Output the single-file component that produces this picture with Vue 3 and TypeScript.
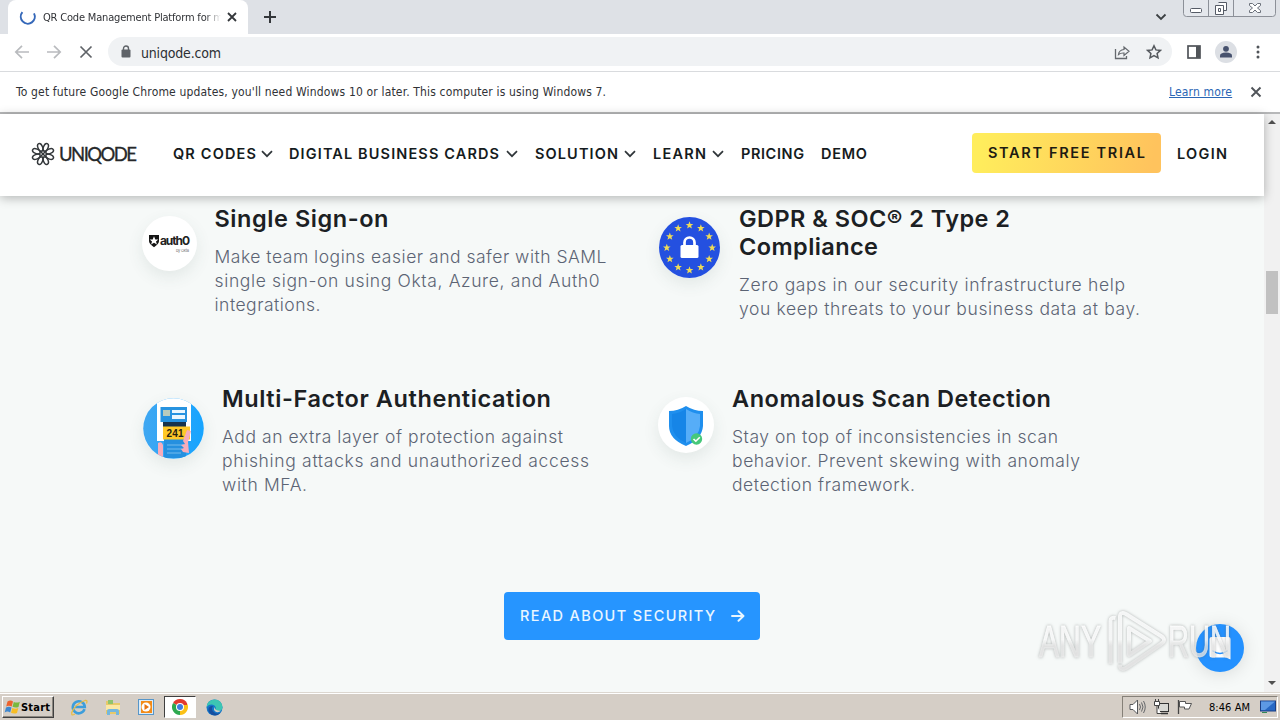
<script setup lang="ts">
import type { Directive } from 'vue'

interface Line { text: string; width: number }
interface Feature { id: string; title: Line[]; body: Line[] }
interface NavItem { text: string; width: number; menu: boolean }

// Tracks a single line of text so that it spans exactly the given width.
const vFit: Directive<HTMLElement, number> = {
  mounted(el, { value }) {
    const count = (el.textContent ?? '').trim().length
    const natural = el.getBoundingClientRect().width
    if (count > 1) el.style.letterSpacing = `${(value - natural) / (count - 1)}px`
    el.style.width = `${value}px`
  },
}

const nav: NavItem[] = [
  { text: 'QR CODES', width: 83, menu: true },
  { text: 'DIGITAL BUSINESS CARDS', width: 210, menu: true },
  { text: 'SOLUTION', width: 83, menu: true },
  { text: 'LEARN', width: 53, menu: true },
  { text: 'PRICING', width: 63, menu: false },
  { text: 'DEMO', width: 46, menu: false },
]

const features: Feature[] = [
  {
    id: 'sso',
    title: [{ text: 'Single Sign-on', width: 174 }],
    body: [
      { text: 'Make team logins easier and safer with SAML', width: 392 },
      { text: 'single sign-on using Okta, Azure, and Auth0', width: 385 },
      { text: 'integrations.', width: 106 },
    ],
  },
  {
    id: 'gdpr',
    title: [{ text: 'GDPR & SOC® 2 Type 2', width: 271 }, { text: 'Compliance', width: 139 }],
    body: [
      { text: 'Zero gaps in our security infrastructure help', width: 386 },
      { text: 'you keep threats to your business data at bay.', width: 401 },
    ],
  },
  {
    id: 'mfa',
    title: [{ text: 'Multi-Factor Authentication', width: 329 }],
    body: [
      { text: 'Add an extra layer of protection against', width: 341 },
      { text: 'phishing attacks and unauthorized access', width: 367 },
      { text: 'with MFA.', width: 85 },
    ],
  },
  {
    id: 'scan',
    title: [{ text: 'Anomalous Scan Detection', width: 319 }],
    body: [
      { text: 'Stay on top of inconsistencies in scan', width: 326 },
      { text: 'behavior. Prevent skewing with anomaly', width: 348 },
      { text: 'detection framework.', width: 183 },
    ],
  },
]

const star = '0,-4 1,-1.3 3.8,-1.2 1.6,.5 2.4,3.2 0,1.6 -2.4,3.2 -1.6,.5 -3.8,-1.2 -1,-1.3'
const stars = Array.from({ length: 12 }, (_, i) => {
  const a = (i * Math.PI) / 6
  return `translate(${(30.5 + 22.7 * Math.sin(a)).toFixed(2)} ${(30.8 - 22.5 * Math.cos(a)).toFixed(2)})`
})
const petals = [22.5, 67.5, 112.5, 157.5, 202.5, 247.5, 292.5, 337.5]
</script>

<template>
  <div class="screen">
    <div class="tabstrip">
      <div class="tab">
        <svg class="spinner" width="18" height="18" viewBox="0 0 18 18"><path d="M3.4 4.2A7 7 0 1 0 15 5.4" fill="none" stroke="#3568b9" stroke-width="2" /></svg>
        <div class="tab-title"><span v-fit="180" class="fit">QR Code Management Platform for m</span></div>
        <svg width="10" height="10" viewBox="0 0 10 10"><path d="M1 1l8 8M9 1l-8 8" stroke="#34373b" stroke-width="1.8" /></svg>
      </div>
      <svg class="plus" width="14" height="14" viewBox="0 0 14 14"><path d="M7 1v12M1 7h12" stroke="#34373b" stroke-width="2" /></svg>
      <svg class="tab-search" width="12" height="8" viewBox="0 0 12 8"><path d="M1.5 1.5L6 6l4.5-4.5" fill="none" stroke="#3c4043" stroke-width="1.8" /></svg>
      <div class="winctl">
        <svg width="94" height="17" viewBox="0 0 94 17">
          <path d="M.5 0v13.5q0 3 3 3h86q3 0 3-3V0M25.5 0v16M50.5 0v16" fill="#e4e7ec" stroke="#8c9098" />
          <rect x="7.5" y="8.5" width="11" height="4" rx="1" fill="#fff" stroke="#555b66" />
          <path d="M35.500 2.500h8v8h-3M32.500 5.500h8v9h-8zM35.500 8.500h2v3h-2z" fill="#fff" stroke="#555b66" />
          <path d="M66.500 3.500h3l2.500 2.500 2.500-2.500h3v2l-3 2.500 3 2.500v2h-3l-2.500-2.500-2.500 2.500h-3v-2l3-2.500-3-2.500z" fill="#fff" stroke="#6a707a" />
        </svg>
      </div>
    </div>

    <div class="toolbar">
      <svg class="nav-ico" width="16" height="16" viewBox="0 0 16 16"><path d="M15 8H2M8 1.800L1.800 8 8 14.200" fill="none" stroke="#b9bbbe" stroke-width="1.700" /></svg>
      <svg class="nav-ico" width="16" height="16" viewBox="0 0 16 16"><path d="M1 8h13M8 1.800L14.200 8 8 14.200" fill="none" stroke="#b9bbbe" stroke-width="1.700" /></svg>
      <svg class="nav-ico" width="16" height="16" viewBox="0 0 16 16"><path d="M2.500 2.500l11 11M13.500 2.500l-11 11" stroke="#5f6368" stroke-width="1.700" /></svg>
      <div class="omnibox">
        <svg width="10" height="13" viewBox="0 0 10 13"><rect x=".5" y="4.500" width="9" height="8" rx="1" fill="#5f6368" /><path d="M2.500 5V3.500a2.500 2.500 0 0 1 5 0V5" fill="none" stroke="#5f6368" stroke-width="1.400" /></svg>
        <span v-fit="80" class="fit url">uniqode.com</span>
        <svg class="share" width="16" height="16" viewBox="0 0 16 16"><path d="M1.500 5v9.500h11V12" fill="none" stroke="#65696e" stroke-width="1.300" /><path d="M4.500 10.500Q5 6 10 5.500V3l5 4.300-5 4.200V9Q6.500 8.800 4.500 10.500z" fill="none" stroke="#65696e" stroke-width="1.200" /></svg>
        <svg class="fav" width="16" height="16" viewBox="0 0 16 16"><path d="M8 1.800l1.900 4.100 4.500.5-3.300 3 .9 4.500L8 11.700l-4 2.200.9-4.500-3.300-3 4.500-.5z" fill="none" stroke="#55595e" stroke-width="1.500" /></svg>
      </div>
      <svg class="side" width="14" height="14" viewBox="0 0 14 14"><rect x="1" y="1" width="12" height="12" fill="none" stroke="#505459" stroke-width="1.700" /><path d="M9 1h4v12H9z" fill="#505459" /></svg>
      <svg class="avatar" width="22" height="22" viewBox="0 0 22 22"><circle cx="11" cy="11" r="11" fill="#dcdfe4" /><circle cx="11" cy="7.800" r="2.900" fill="#46516d" /><path d="M5 16.500v-1.700q0-3 6-3.200 6 .2 6 3.200v1.700z" fill="#46516d" /></svg>
      <svg class="dots" width="4" height="14" viewBox="0 0 4 14"><circle cx="2" cy="2" r="1.500" /><circle cx="2" cy="7" r="1.500" /><circle cx="2" cy="12" r="1.500" /></svg>
    </div>

    <div class="infobar">
      <span v-fit="590" class="fit">To get future Google Chrome updates, you'll need Windows 10 or later. This computer is using Windows 7.</span>
      <a class="learn"><span v-fit="63" class="fit">Learn more</span></a>
      <svg width="12" height="12" viewBox="0 0 12 12"><path d="M1.500 1.500l9 9M10.500 1.500l-9 9" stroke="#505459" stroke-width="1.900" /></svg>
    </div>

    <div class="viewport">
      <div class="page">
        <header class="site-header">
          <svg class="mark" width="24" height="24" viewBox="-12 -12 24 24">
            <g fill="none" stroke="#34383b" stroke-width="1.500">
              <ellipse v-for="a in petals" :key="a" cx="0" cy="-7.200" rx="2.300" ry="4" :transform="`rotate(${a})`" />
              <path d="M-4.500-4.500L4.500 4.500M4.500-4.500L-4.500 4.500M0-4v8M-4 0h8" stroke-width="1" />
            </g>
          </svg>
          <span v-fit="78" class="fit wordmark">UNIQODE</span>
          <nav class="nav">
            <span v-for="item in nav" :key="item.text" class="nav-item">
              <span v-fit="item.width" class="fit">{{ item.text }}</span>
              <svg v-if="item.menu" width="12" height="8" viewBox="0 0 12 8"><path d="M1 1.200L6 6.200l5-5" fill="none" stroke="#30363a" stroke-width="1.700" /></svg>
            </span>
          </nav>
          <a class="trial"><span v-fit="157" class="fit">START FREE TRIAL</span></a>
          <span v-fit="50" class="fit login">LOGIN</span>
        </header>

        <main class="features">
          <article v-for="f in features" :key="f.id" class="feature" :class="`feature-${f.id}`">
            <div class="badge">
              <svg v-if="f.id === 'sso'" width="55" height="55" viewBox="0 0 55 55">
                <path d="M7 19h10v6q0 3-5 6.200-5-3.200-5-6.200z" fill="#151515" />
                <path d="M12 20.300l1.300 3.100 3 .1-2.300 2 .9 3.100-2.900-1.900-2.900 1.900.9-3.100-2.300-2 3-.1z" fill="#fff" />
                <text x="18" y="29" class="auth" textLength="30">auth0</text>
                <text x="34" y="35.500" class="byokta" textLength="13">by Okta</text>
              </svg>
              <svg v-else-if="f.id === 'gdpr'" width="61" height="61" viewBox="0 0 61 61">
                <circle cx="30.500" cy="30.500" r="30.500" fill="#2450e0" />
                <polygon v-for="s in stars" :key="s" :points="star" :transform="s" fill="#eedb58" />
                <rect x="21.500" y="28" width="18" height="13" rx="1.500" fill="#fff" />
                <path d="M25.500 29v-3.500a5 5 0 0 1 10 0V29" fill="none" stroke="#fff" stroke-width="2.700" />
              </svg>
              <svg v-else-if="f.id === 'mfa'" width="61" height="61" viewBox="0 0 61 61">
                <defs>
                  <clipPath id="mfaClip"><circle cx="30.500" cy="30.500" r="30.300" /></clipPath>
                  <linearGradient id="mfaSky" x1="0" x2="1"><stop stop-color="#40a7f1" /><stop offset="1" stop-color="#16a4ff" /></linearGradient>
                </defs>
                <g clip-path="url(#mfaClip)">
                  <rect width="61" height="61" fill="url(#mfaSky)" />
                  <path d="M14 0h34v43H14z" fill="#fff" />
                  <rect x="17.500" y="9" width="26.500" height="15" fill="#2793e0" />
                  <rect x="20" y="12" width="7" height="6" fill="#b9cbbd" />
                  <path d="M29 12h13v3H29zM29 17h13v4H29z" fill="#eaf7ff" />
                  <path d="M20 24h23v6H20z" fill="#17334c" />
                  <path d="M21 40h22v20H21z" fill="#2590df" />
                  <path d="M24 47h17M24 51h15M24 55h14" stroke="#74bbec" />
                  <rect x="20" y="28.500" width="27" height="13" fill="#ffc928" />
                  <text x="23.500" y="38.500" class="code" textLength="17">241</text>
                  <path d="M15 45q4-2 5 2v14h-5zM44 32l4 1-3 11 1 11-6-1-2-3 3-1-3-3 4-1-2-3z" fill="#f8acba" />
                </g>
              </svg>
              <svg v-else width="56" height="56" viewBox="0 0 56 56">
                <path d="M28 9Q36 14 45 14V29Q44 42 28 49 11 42 11 29V14Q20 14 28 9z" fill="#1f8fee" />
                <path d="M28 12Q35 16.500 42 17v12Q41 40 28 46z" fill="#56adf8" />
                <path d="M28 12Q21 16.500 14 17v12q1 11 14 17z" fill="#1685e7" />
                <circle cx="38.500" cy="42" r="5.700" fill="#46c87a" /><path d="M35.500 42l2.300 2.200 4-4" fill="none" stroke="#fff" stroke-width="1.600" />
              </svg>
            </div>
            <div>
              <h3><span v-for="l in f.title" :key="l.text" v-fit="l.width" class="fit line">{{ l.text }}</span></h3>
              <p><span v-for="l in f.body" :key="l.text" v-fit="l.width" class="fit line">{{ l.text }}</span></p>
            </div>
          </article>
        </main>

        <a class="cta">
          <span v-fit="195" class="fit">READ ABOUT SECURITY</span>
          <svg width="14" height="12" viewBox="0 0 14 12"><path d="M1 6h11M7.500 1.200L12.500 6l-5 4.800" fill="none" stroke="#e9f6ff" stroke-width="1.900" stroke-linecap="round" stroke-linejoin="round" /></svg>
        </a>
      </div>
      <div class="scrollbar">
        <svg width="8" height="5" viewBox="0 0 8 5"><path d="M0 5l4-4 4 4z" fill="#505050" /></svg>
        <div class="thumb"></div>
        <svg class="down" width="8" height="5" viewBox="0 0 8 5"><path d="M0 0l4 4 4-4z" fill="#505050" /></svg>
      </div>
    </div>

    <footer class="taskbar">
      <div class="start">
        <svg width="17" height="16" viewBox="0 0 17 16">
          <path d="M3.500 2.500q3-2 5.500 0L7.700 7.500q-3-1.500-5.500 0z" fill="#ed622d" /><path d="M9.800 3q3 1.300 6-.3L14.500 8q-3 1.200-6-.3z" fill="#79b83d" />
          <path d="M2 8.500q3-1.500 5.500 0L6.200 13.500q-3-1.800-5.500 0z" fill="#3e87cf" /><path d="M8.300 9q3 1.400 6 .1L13 14q-3 1.200-6-.2z" fill="#f7bd25" />
        </svg>
        <span v-fit="29" class="fit">Start</span>
      </div>
      <svg class="app-ico ie" width="18" height="18" viewBox="0 0 18 18"><path d="M14.500 11.200a6 6 0 1 1 .3-2.200H5" fill="none" stroke="#3d9edb" stroke-width="2.600" /><path d="M2 14.500q-1.500 4 3 1.500M1.500 15Q5 6 15 2.500q3-.7 1.500 3" fill="none" stroke="#e8bd44" stroke-width="1.300" /></svg>
      <svg class="app-ico" width="18" height="18" viewBox="0 0 18 18"><path d="M2 3h6l1 2h7v11H2z" fill="#e7c969" /><path d="M4 2h5v4H4z" fill="#8fc46d" /><path d="M2 7h14v5H2z" fill="#fae8a5" /><path d="M3 17v-4q0-2 2-2h8q2 0 2 2v4h-3v-3H6v3z" fill="#74b7dd" /></svg>
      <svg class="app-ico" width="16" height="16" viewBox="0 0 16 16"><rect x=".5" y=".5" width="15" height="15" fill="#dcecf8" stroke="#5796c9" /><rect x="3" y="2" width="11" height="12" fill="#f38b18" /><circle cx="8" cy="8" r="4.500" fill="#fff" /><path d="M6.500 5l4.500 3-4.500 3z" fill="#e67412" /></svg>
      <div class="active-app">
        <svg width="16" height="16" viewBox="0 0 16 16"><path d="M8 8L1.070 4A8 8 0 0 1 14.930 4z" fill="#e33b2e" /><path d="M8 8l6.930-4A8 8 0 0 1 8 16z" fill="#fbc116" /><path d="M8 8v8A8 8 0 0 1 1.070 4z" fill="#2da94f" /><path d="M8 4h7v2H8z" fill="#e33b2e" /><circle cx="8" cy="8" r="4" fill="#fff" /><circle cx="8" cy="8" r="3" fill="#3f7de0" /></svg>
      </div>
      <svg class="app-ico edge" width="17" height="17" viewBox="0 0 17 17"><circle cx="8.500" cy="8.500" r="8" fill="#1476c9" /><path d="M.7 8Q1 1 8.500.5q7 .2 8 7.500 0 4-4.500 4-3 0-2.500-2 1-2-1-3.500Q4 4 .7 8z" fill="#3cc6b3" /><path d="M7 7q-3 4 2 7 3 1.500 6-.8-4 5-9 2.500Q1 13 3 8.500 4 6.500 7 7z" fill="#174f9f" /><path d="M9 8q-1 4 6 3.800-3 2.500-6 .5-2-2 0-4.300z" fill="#d6cfc7" /></svg>
      <div class="tray">
        <svg width="17" height="16" viewBox="0 0 17 16"><path d="M1 5.500h3L8.500 1v14L4 10.500H1z" fill="#fff" stroke="#55575a" /><path d="M10.500 5q2 3 0 6M12.500 3.500q3 4.500 0 9M14.500 2q3.500 6 0 12" fill="none" stroke="#65676a" /></svg>
        <svg width="17" height="16" viewBox="0 0 17 16"><rect x="5.500" y="4.500" width="10" height="8" fill="#d8d8d4" stroke="#333" /><path d="M8 14.500h7" stroke="#333" stroke-width="1.500" /><path d="M1.500 2.500h5v4h-5zM2.500 0v2M5.500 0v2M4 7v7.500h4" fill="#fff" stroke="#444" /></svg>
        <svg width="17" height="16" viewBox="0 0 17 16"><path d="M1.500 1v14" stroke="#444" stroke-width="1.300" /><path d="M2.500 2.500h6v2h6L12 10H7.500V8h-5z" fill="#fff" stroke="#555" /></svg>
        <span v-fit="41" class="fit clock">8:46 AM</span>
        <svg class="desk" width="16" height="14" viewBox="0 0 16 14"><rect x=".5" y="1" width="15" height="10" fill="#2768c4" stroke="#1b3f85" /><path d="M1 1.500h14L5 10H1z" fill="#5d99e4" /><path d="M2 12.500h5" stroke="#385" /></svg>
      </div>
    </footer>

    <div class="chat">
      <svg width="48" height="48" viewBox="0 0 48 48"><path d="M15.500 13h17q2 0 2 2v20.500l-4.500-2H15.500q-2 0-2-2V15q0-2 2-2z" fill="#fff" /><path d="M17 27q7 5 14 0" fill="none" stroke="#2491ff" stroke-width="1.500" stroke-linecap="round" /></svg>
    </div>
    <svg class="watermark" width="220" height="80" viewBox="0 0 220 80">
      <defs>
        <linearGradient id="wm" x1="0" y1="0" x2="0" y2="80" gradientUnits="userSpaceOnUse"><stop offset=".48" stop-color="#fff" stop-opacity=".85" /><stop offset=".56" stop-color="#ececec" stop-opacity=".75" /></linearGradient>
      </defs>
      <g class="wm-text" fill="url(#wm)" stroke="url(#wm)" stroke-width=".8">
        <text x="9" y="56" textLength="62" lengthAdjust="spacingAndGlyphs">ANY</text>
        <text x="138" y="56" textLength="63" lengthAdjust="spacingAndGlyphs">RUN</text>
      </g>
      <path d="M80.500 63V20q0-4 5-3M90 62V16q0-6 6-3l35 22q6 4 0 8L96 67q-6 3-6-3M99 27v27l21-14z" fill="none" stroke="url(#wm)" stroke-width="4" stroke-linejoin="round" />
    </svg>
  </div>
</template>

<style>
html, body { margin: 0; overflow: hidden; }
</style>

<style scoped>
.screen { position: relative; width: 1280px; height: 720px; display: flex; flex-direction: column; overflow: hidden; background: #fff; font: 12px "DejaVu Sans Condensed", "DejaVu Sans", sans-serif; color: #303236; }
.screen * { box-sizing: border-box; }
svg { display: block; flex: none; }
.fit { display: inline-block; width: max-content; flex: none; white-space: nowrap; }
.tabstrip { height: 34px; flex: none; display: flex; background: #dee1e6; }
.tab { width: 240px; height: 34px; margin-left: 8px; padding: 0 11px 0 11px; border-radius: 8px 8px 0 0; background: #fff; display: flex; align-items: center; }
.tab-title { width: 178px; margin: 0 6px 0 6px; overflow: hidden; font-size: 11px; mask-image: linear-gradient(90deg, #000 162px, transparent 178px); }
.plus { margin: 10px 0 0 15px; }
.tab-search { margin: 13px 16px 0 auto; }
.winctl { margin-right: 3px; }
.toolbar { height: 38px; flex: none; display: flex; align-items: center; padding: 0 20px 2px 14px; border-bottom: 1px solid #d9dbde; }
.nav-ico { margin-right: 16px; }
.omnibox { width: 1064px; height: 29px; margin-left: -2px; padding: 0 10px 0 13px; border-radius: 15px; background: #f0f2f4; display: flex; align-items: center; }
.url { margin: 2px 0 0 10px; font-size: 14px; color: #2c2f33; }
.share { margin-left: auto; margin-right: 16px; }
.side { margin-left: 15px; }
.avatar { margin-left: 14px; }
.dots { margin-left: auto; fill: #505459; }
.infobar { height: 42px; flex: none; display: flex; align-items: center; padding: 0 18px 1px 16px; border-bottom: 2px solid #b7b8b9; }
.learn { margin: 0 18px 0 auto; color: #2a66b5; }
.learn .fit { text-decoration: underline; }
.viewport { height: 578px; flex: none; display: flex; }
.page { width: 1264px; background: #f6f9f8; font-family: Inter, "Liberation Sans", sans-serif; }
.site-header { position: relative; height: 82px; display: flex; align-items: center; padding: 0 37px 4px 31px; background: #fff; box-shadow: 0 2px 10px rgba(0, 0, 0, .28); color: #151b20; font-size: 14.500px; font-weight: 600; }
.mark { margin-top: 2px; }
.wordmark { margin: 2px 0 0 4px; font-family: Lato, sans-serif; font-size: 18.500px; font-weight: 400; color: #26282a; -webkit-text-stroke: .3px #26282a; }
.nav { display: flex; gap: 17px; margin-left: 36px; }
.nav-item { display: flex; align-items: center; }
.nav-item svg { margin-left: 7px; margin-top: 2px; }
.nav-item:nth-child(n + 3) svg { margin-left: 6px; }
.nav-item:first-child { margin-right: -1px; }
.nav-item:first-child svg { margin-left: 5px; }
.trial { width: 189px; height: 40px; margin: 0 16px 0 auto; padding: 0 0 1px 16px; display: flex; align-items: center; border-radius: 4px; background: linear-gradient(100deg, #ffed5c 5%, #ffc35d 95%); color: #1d1b12; }
.features { display: grid; grid-template-columns: 517px 1fr; grid-template-rows: 180px 180px; padding: 9px 0 0 142px; }
.feature { display: flex; align-items: flex-start; }
.badge { flex: none; border-radius: 50%; box-shadow: 0 6px 16px rgba(60, 90, 80, .1); background: #fff; }
.feature-sso .badge { margin: 11px 17.500px 0 0; }
.feature-gdpr .badge { margin: 12px 19px 0 0; }
.feature-mfa .badge { margin: 13px 18px 0 1px; }
.feature-scan .badge { margin: 12px 18px 0 -1px; }
h3 { margin: 0 0 12px; font-size: 23.500px; line-height: 28px; font-weight: 600; color: #1b2023; }
p { margin: 0; font-size: 17.500px; line-height: 24px; font-weight: 300; color: #5c6474; }
.line { display: block; }
.auth { font: 700 12px Inter, sans-serif; fill: #222; }
.byokta { font: 4px Inter, sans-serif; fill: #777; }
.code { font: 700 10px "Liberation Sans", sans-serif; fill: #26210f; }
.cta { width: 256px; height: 48px; margin: 27px 0 0 504px; padding: 0 15px 1px 16px; display: flex; align-items: center; justify-content: space-between; border-radius: 4px; background: #2695ff; color: #e9f6ff; font-size: 14.500px; font-weight: 500; }
.scrollbar { width: 16px; background: #f1f1f1; display: flex; flex-direction: column; align-items: center; padding: 5px 0 6px; }
.thumb { width: 12px; height: 43px; margin-top: 147px; background: #c1c1c1; }
.down { margin-top: auto; }
.taskbar { height: 28px; flex: none; display: flex; align-items: center; padding: 1px 2px 0 2px; background: #d5cec6; border-top: 1px solid #dcd7d0; box-shadow: inset 0 1px #fff; color: #000; font-size: 11px; }
.start { width: 52px; height: 22px; padding-left: 1px; display: flex; align-items: center; border: 1px solid; border-color: #fff #404040 #404040 #fff; box-shadow: inset -1px -1px #8c8780; font-weight: 700; }
.app-ico { margin-left: 16px; }
.ie { margin-left: 16px; }
.active-app { width: 32px; height: 22px; margin-left: 10px; display: flex; align-items: center; justify-content: center; background: #fff; border: 1px solid; border-color: #404040 #fff #fff #404040; }
.edge { margin-left: 10px; }
.tray { width: 156px; height: 22px; margin-left: auto; padding: 0 1px 0 6px; display: flex; align-items: center; gap: 7px; border: 1px solid; border-color: #858078 #fff #fff #858078; }
.clock { margin-left: 8px; }
.desk { margin-left: auto; }
.chat { position: absolute; left: 1196px; top: 624px; width: 48px; height: 48px; border-radius: 50%; background: #2491ff; box-shadow: 0 2px 18px rgba(0, 0, 0, .12); }
.watermark { position: absolute; left: 1030px; top: 601px; filter: drop-shadow(0 0 1.500px rgba(80, 85, 85, .5)); }
.wm-text { font: 400 44px "Liberation Sans", sans-serif; }
</style>
